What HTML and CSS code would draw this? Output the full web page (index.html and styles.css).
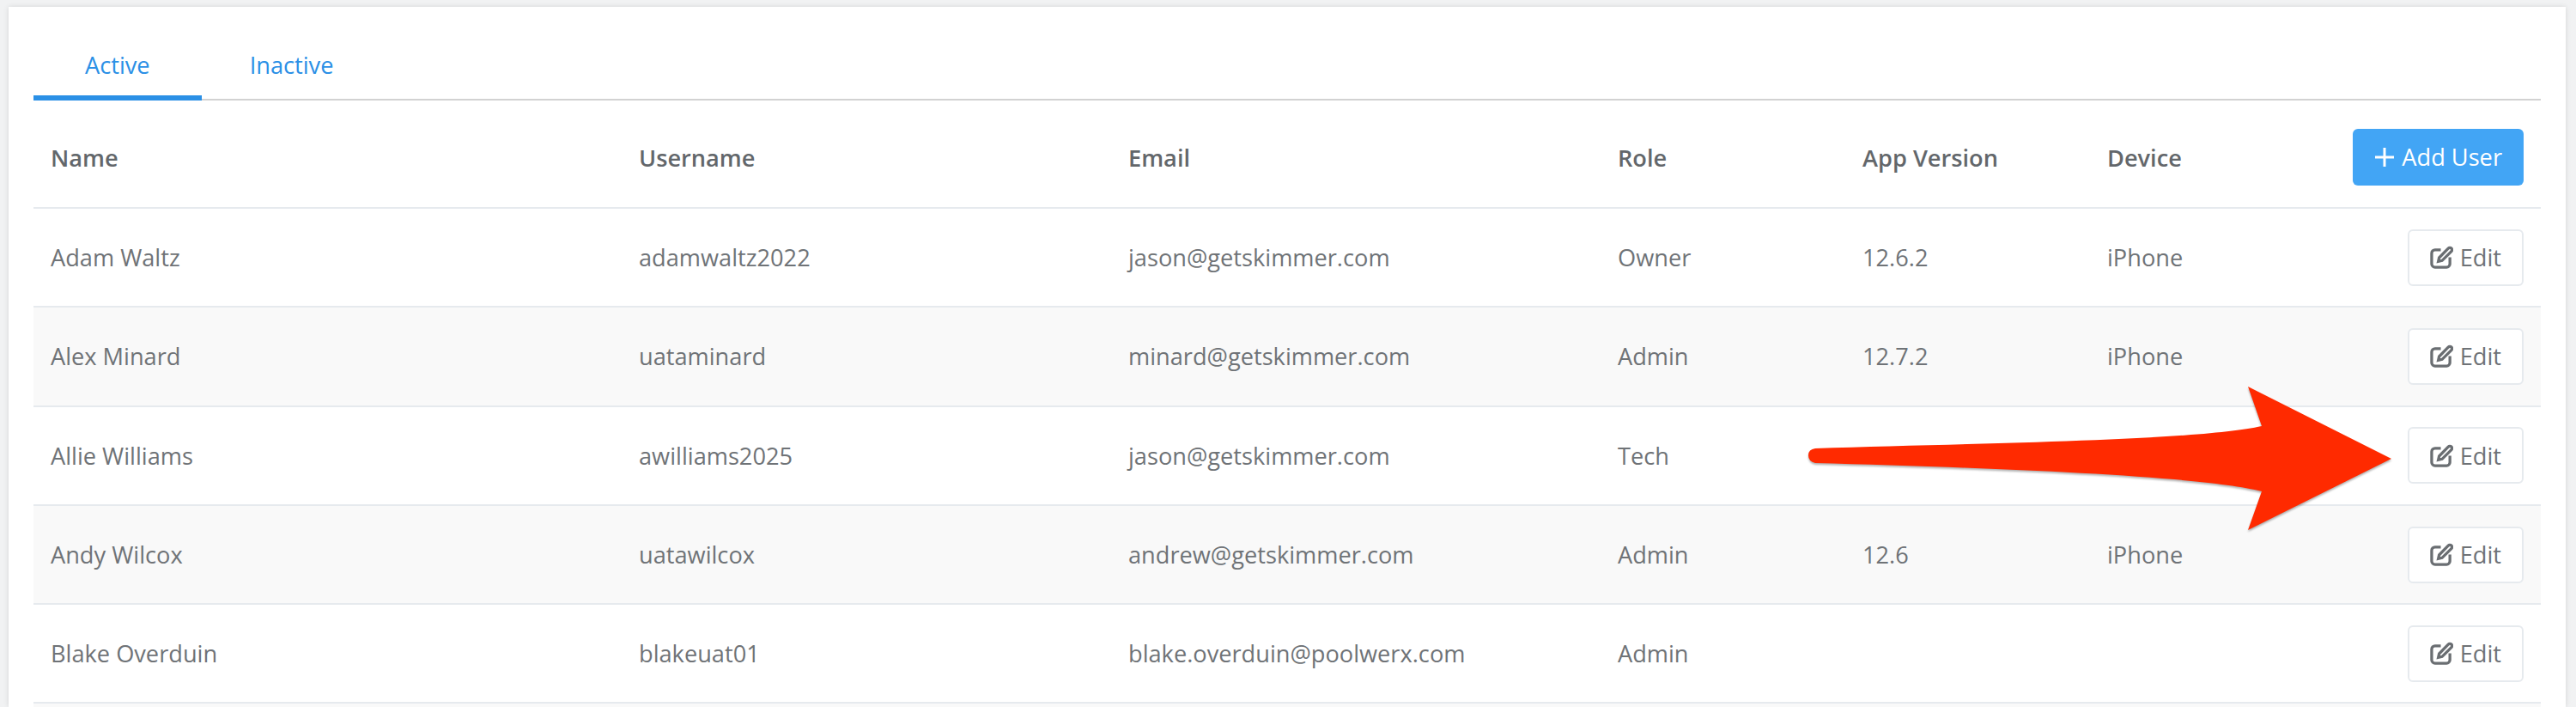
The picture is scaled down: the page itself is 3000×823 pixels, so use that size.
FILE: index.html
```html
<!DOCTYPE html>
<html lang="en">
<head>
    <meta charset="UTF-8">
    <title>Users</title>
    <link rel="stylesheet" href="styles.css">
</head>
<body>
    <main class="card">
        <nav class="tabs">
            <a class="tab active" href="#">Active</a>
            <a class="tab" href="#">Inactive</a>
        </nav>

        <table class="users">
            <colgroup>
                <col class="col-name">
                <col class="col-username">
                <col class="col-email">
                <col class="col-role">
                <col class="col-version">
                <col class="col-device">
                <col>
            </colgroup>
            <thead>
                <tr>
                    <th>Name</th>
                    <th>Username</th>
                    <th>Email</th>
                    <th>Role</th>
                    <th>App Version</th>
                    <th>Device</th>
                    <th class="actions">
                        <button class="btn btn-add">
                            <svg class="icon-plus" viewBox="0 0 24 24"><path d="M12 1v22M1 12h22"/></svg>
                            Add User
                        </button>
                    </th>
                </tr>
            </thead>
            <tbody>
                <tr>
                    <td>Adam Waltz</td>
                    <td>adamwaltz2022</td>
                    <td>jason@getskimmer.com</td>
                    <td>Owner</td>
                    <td>12.6.2</td>
                    <td>iPhone</td>
                    <td class="actions"><button class="btn btn-edit"><svg class="icon-edit" viewBox="0 0 28 28"><path class="box" d="M13 5H6a4 4 0 0 0-4 4v13a4 4 0 0 0 4 4h14a4 4 0 0 0 4-4v-8"/><path class="pen" d="M11 14.5 22 3.2a2.6 2.6 0 0 1 3.8 3.7L14.6 18l-4.6 1z"/></svg>Edit</button></td>
                </tr>
                <tr>
                    <td>Alex Minard</td>
                    <td>uataminard</td>
                    <td>minard@getskimmer.com</td>
                    <td>Admin</td>
                    <td>12.7.2</td>
                    <td>iPhone</td>
                    <td class="actions"><button class="btn btn-edit"><svg class="icon-edit" viewBox="0 0 28 28"><path class="box" d="M13 5H6a4 4 0 0 0-4 4v13a4 4 0 0 0 4 4h14a4 4 0 0 0 4-4v-8"/><path class="pen" d="M11 14.5 22 3.2a2.6 2.6 0 0 1 3.8 3.7L14.6 18l-4.6 1z"/></svg>Edit</button></td>
                </tr>
                <tr>
                    <td>Allie Williams</td>
                    <td>awilliams2025</td>
                    <td>jason@getskimmer.com</td>
                    <td>Tech</td>
                    <td></td>
                    <td></td>
                    <td class="actions"><button class="btn btn-edit"><svg class="icon-edit" viewBox="0 0 28 28"><path class="box" d="M13 5H6a4 4 0 0 0-4 4v13a4 4 0 0 0 4 4h14a4 4 0 0 0 4-4v-8"/><path class="pen" d="M11 14.5 22 3.2a2.6 2.6 0 0 1 3.8 3.7L14.6 18l-4.6 1z"/></svg>Edit</button></td>
                </tr>
                <tr>
                    <td>Andy Wilcox</td>
                    <td>uatawilcox</td>
                    <td>andrew@getskimmer.com</td>
                    <td>Admin</td>
                    <td>12.6</td>
                    <td>iPhone</td>
                    <td class="actions"><button class="btn btn-edit"><svg class="icon-edit" viewBox="0 0 28 28"><path class="box" d="M13 5H6a4 4 0 0 0-4 4v13a4 4 0 0 0 4 4h14a4 4 0 0 0 4-4v-8"/><path class="pen" d="M11 14.5 22 3.2a2.6 2.6 0 0 1 3.8 3.7L14.6 18l-4.6 1z"/></svg>Edit</button></td>
                </tr>
                <tr>
                    <td>Blake Overduin</td>
                    <td>blakeuat01</td>
                    <td>blake.overduin@poolwerx.com</td>
                    <td>Admin</td>
                    <td></td>
                    <td></td>
                    <td class="actions"><button class="btn btn-edit"><svg class="icon-edit" viewBox="0 0 28 28"><path class="box" d="M13 5H6a4 4 0 0 0-4 4v13a4 4 0 0 0 4 4h14a4 4 0 0 0 4-4v-8"/><path class="pen" d="M11 14.5 22 3.2a2.6 2.6 0 0 1 3.8 3.7L14.6 18l-4.6 1z"/></svg>Edit</button></td>
                </tr>
                <tr>
                    <td colspan="7"></td>
                </tr>
            </tbody>
        </table>
    </main>

    <!-- red annotation arrow drawn on top of the screenshot -->
    <svg class="arrow" viewBox="0 0 3000 823">
        <path d="M2114 522C2300 516 2560 513 2634 496L2618 450 2785 534 2618 617 2634 572C2560 553 2300 544 2114 539Q2106 537 2106 530 2106 523 2114 522Z"/>
    </svg>
</body>
</html>
```
FILE: styles.css
```css
html, body {
    height: 100%;
    overflow: hidden;
}
body {
    margin: 0;
    padding: 8px 12px 0 10px;
    box-sizing: border-box;
    font-family: "Open Sans", sans-serif;
    font-size: 27.2px;
    color: #6f7377;
    background-color: #f1f2f3;
}
.card {
    height: 100%;
    padding: 29px 29px 0;
    box-sizing: border-box;
    background: white;
    box-shadow: 0 0 6px rgba(0,0,0,0.12);
}
.tabs {
    display: flex;
    height: 80px;
    box-sizing: border-box;
    border-bottom: 2px solid #d2d2d2;
}
.tab {
    height: 80px;
    padding: 0 60px;
    box-sizing: border-box;
    line-height: 77px;
    color: #2b90e6;
    text-decoration: none;
}
.tab + .tab {
    padding-left: 56px;
}
.tab.active {
    border-bottom: 6px solid #2b90e6;
}
.users {
    width: 100%;
    border-collapse: collapse;
    table-layout: fixed;
}
.col-name { width: 685px; }
.col-username { width: 570px; }
.col-email { width: 570px; }
.col-role { width: 285px; }
.col-version { width: 285px; }
.col-device { width: 285px; }
th, td {
    padding: 0 20px;
    text-align: left;
    border-bottom: 2px solid #e6eaee;
}
th {
    height: 125px;
    padding-top: 9px;
    box-sizing: border-box;
    font-weight: 600;
    color: #63676b;
}
td {
    height: 115.3px;
    box-sizing: border-box;
}
tbody tr:nth-child(even) {
    background-color: #f9f9f9;
}
.actions {
    padding-left: 0;
    text-align: right;
}
th.actions {
    padding-top: 7px;
}
.btn {
    display: inline-flex;
    align-items: center;
    height: 66px;
    padding: 0 24px;
    box-sizing: border-box;
    vertical-align: middle;
    font: inherit;
    font-weight: 400;
    border-radius: 6px;
}
.btn-add {
    gap: 8px;
    padding: 0 25px;
    color: white;
    background-color: #42a5f5;
    border: none;
}
.btn-edit {
    gap: 8px;
    color: #6f7377;
    background-color: white;
    border: 2px solid #e6eaee;
}
.icon-plus {
    width: 24px;
    height: 24px;
    fill: none;
    stroke: white;
    stroke-width: 3;
}
.icon-edit {
    width: 27px;
    height: 27px;
    fill: none;
    stroke: #6a6e72;
    stroke-width: 3.4;
}
.arrow {
    position: absolute;
    top: 0;
    left: 0;
    width: 3000px;
    height: 823px;
    fill: #ff2a00;
    filter: drop-shadow(0 2px 1px rgba(0,0,0,0.3));
    pointer-events: none;
}
```
